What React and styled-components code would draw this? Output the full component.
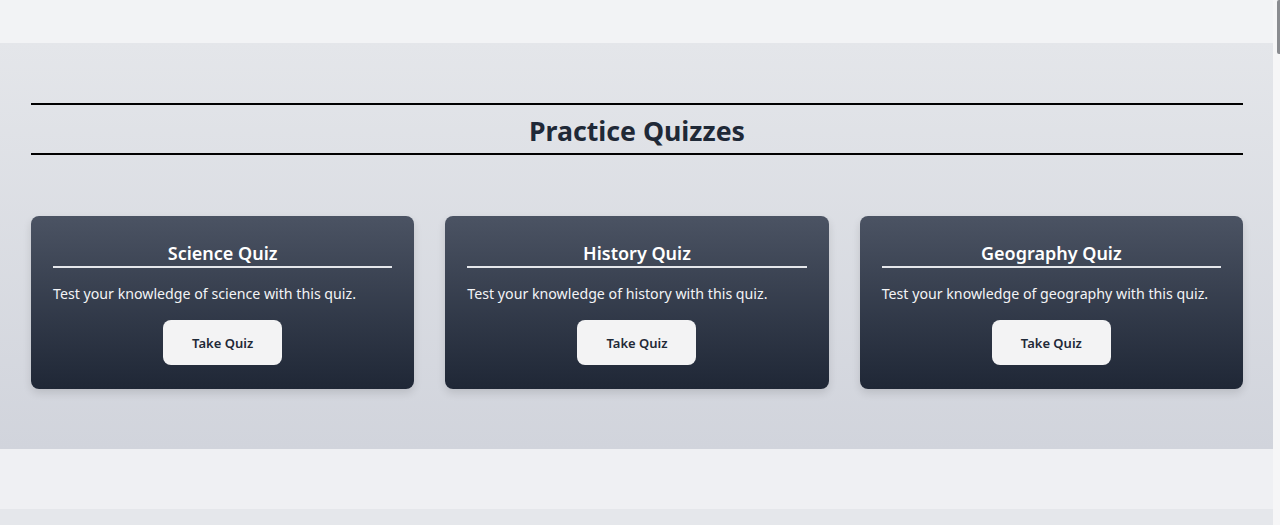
import React from "react";
import styled, { createGlobalStyle } from "styled-components";

const GlobalStyle = createGlobalStyle`
  body {
    margin: 0;
    font-family: "Noto Sans", "Open Sans", sans-serif;
    background: #e5e7eb;
  }
  * {
    box-sizing: border-box;
  }
`;

const quizzes = [
  { title: "Science Quiz", topic: "science" },
  { title: "History Quiz", topic: "history" },
  { title: "Geography Quiz", topic: "geography" },
];

const App = () => {
  return (
    <>
      <GlobalStyle />
      <Page>
        <TopBar />
        <Section id="quizzes">
          <Heading>Practice Quizzes</Heading>
          <Grid>
            {quizzes.map((q) => (
              <Card key={q.title}>
                <CardTitle>{q.title}</CardTitle>
                <CardText>Test your knowledge of {q.topic} with this quiz.</CardText>
                <Button type="button">Take Quiz</Button>
              </Card>
            ))}
          </Grid>
        </Section>
        <Band />
        <Rest />
      </Page>
      <ScrollTrack>
        <ScrollThumb />
      </ScrollTrack>
    </>
  );
};

export default App;

const Page = styled.div`
  margin-right: 7px;
`;

const ScrollTrack = styled.div`
  position: fixed;
  top: 0;
  right: 0;
  bottom: 0;
  width: 7px;
  background: #f6f6f7;
`;

const ScrollThumb = styled.div`
  position: absolute;
  top: 0;
  right: 0;
  width: 3px;
  height: 54px;
  border-radius: 2px 0 0 2px;
  background: #8a8c90;
`;

const TopBar = styled.div`
  height: 43px;
  background: #f2f3f5;
`;

const Section = styled.section`
  padding: 60px 30px 60px 31px;
  background: linear-gradient(to bottom, #e4e6ea, #d1d4dc);
`;

const Heading = styled.h2`
  margin: 0 0 61px;
  height: 52px;
  display: flex;
  align-items: center;
  justify-content: center;
  border-top: 2px solid #000;
  border-bottom: 2px solid #000;
  color: #1f2937;
  font-size: 26.7px;
  font-weight: 700;
  padding-top: 2px;
`;

const Grid = styled.div`
  display: grid;
  grid-template-columns: repeat(3, 1fr);
  gap: 31px;
`;

const Card = styled.div`
  display: flex;
  flex-direction: column;
  align-items: center;
  padding: 25px 22px 24px;
  border-radius: 8px;
  background: linear-gradient(to bottom, #4b5363, #1f2736);
  box-shadow: 0 4px 8px rgba(0, 0, 0, 0.12);
  color: #fff;
`;

const CardTitle = styled.h3`
  width: 100%;
  margin: 0;
  padding-bottom: 0;
  border-bottom: 2px solid #e5e7eb;
  text-align: center;
  font-size: 18px;
  font-weight: 600;
  line-height: 25px;
`;

const CardText = styled.p`
  width: 100%;
  margin: 15px 0;
  font-size: 14.2px;
  line-height: 22px;
  color: #f3f4f6;
`;

const Button = styled.button`
  width: 119px;
  height: 45px;
  border: none;
  border-radius: 8px;
  background: #f3f3f4;
  color: #1f2937;
  font-family: inherit;
  font-size: 13px;
  font-weight: 600;
  cursor: pointer;
`;

const Band = styled.div`
  height: 60px;
  background: #eff0f3;
`;

const Rest = styled.div`
  height: 4500px;
  background: #e5e7eb;
`;
